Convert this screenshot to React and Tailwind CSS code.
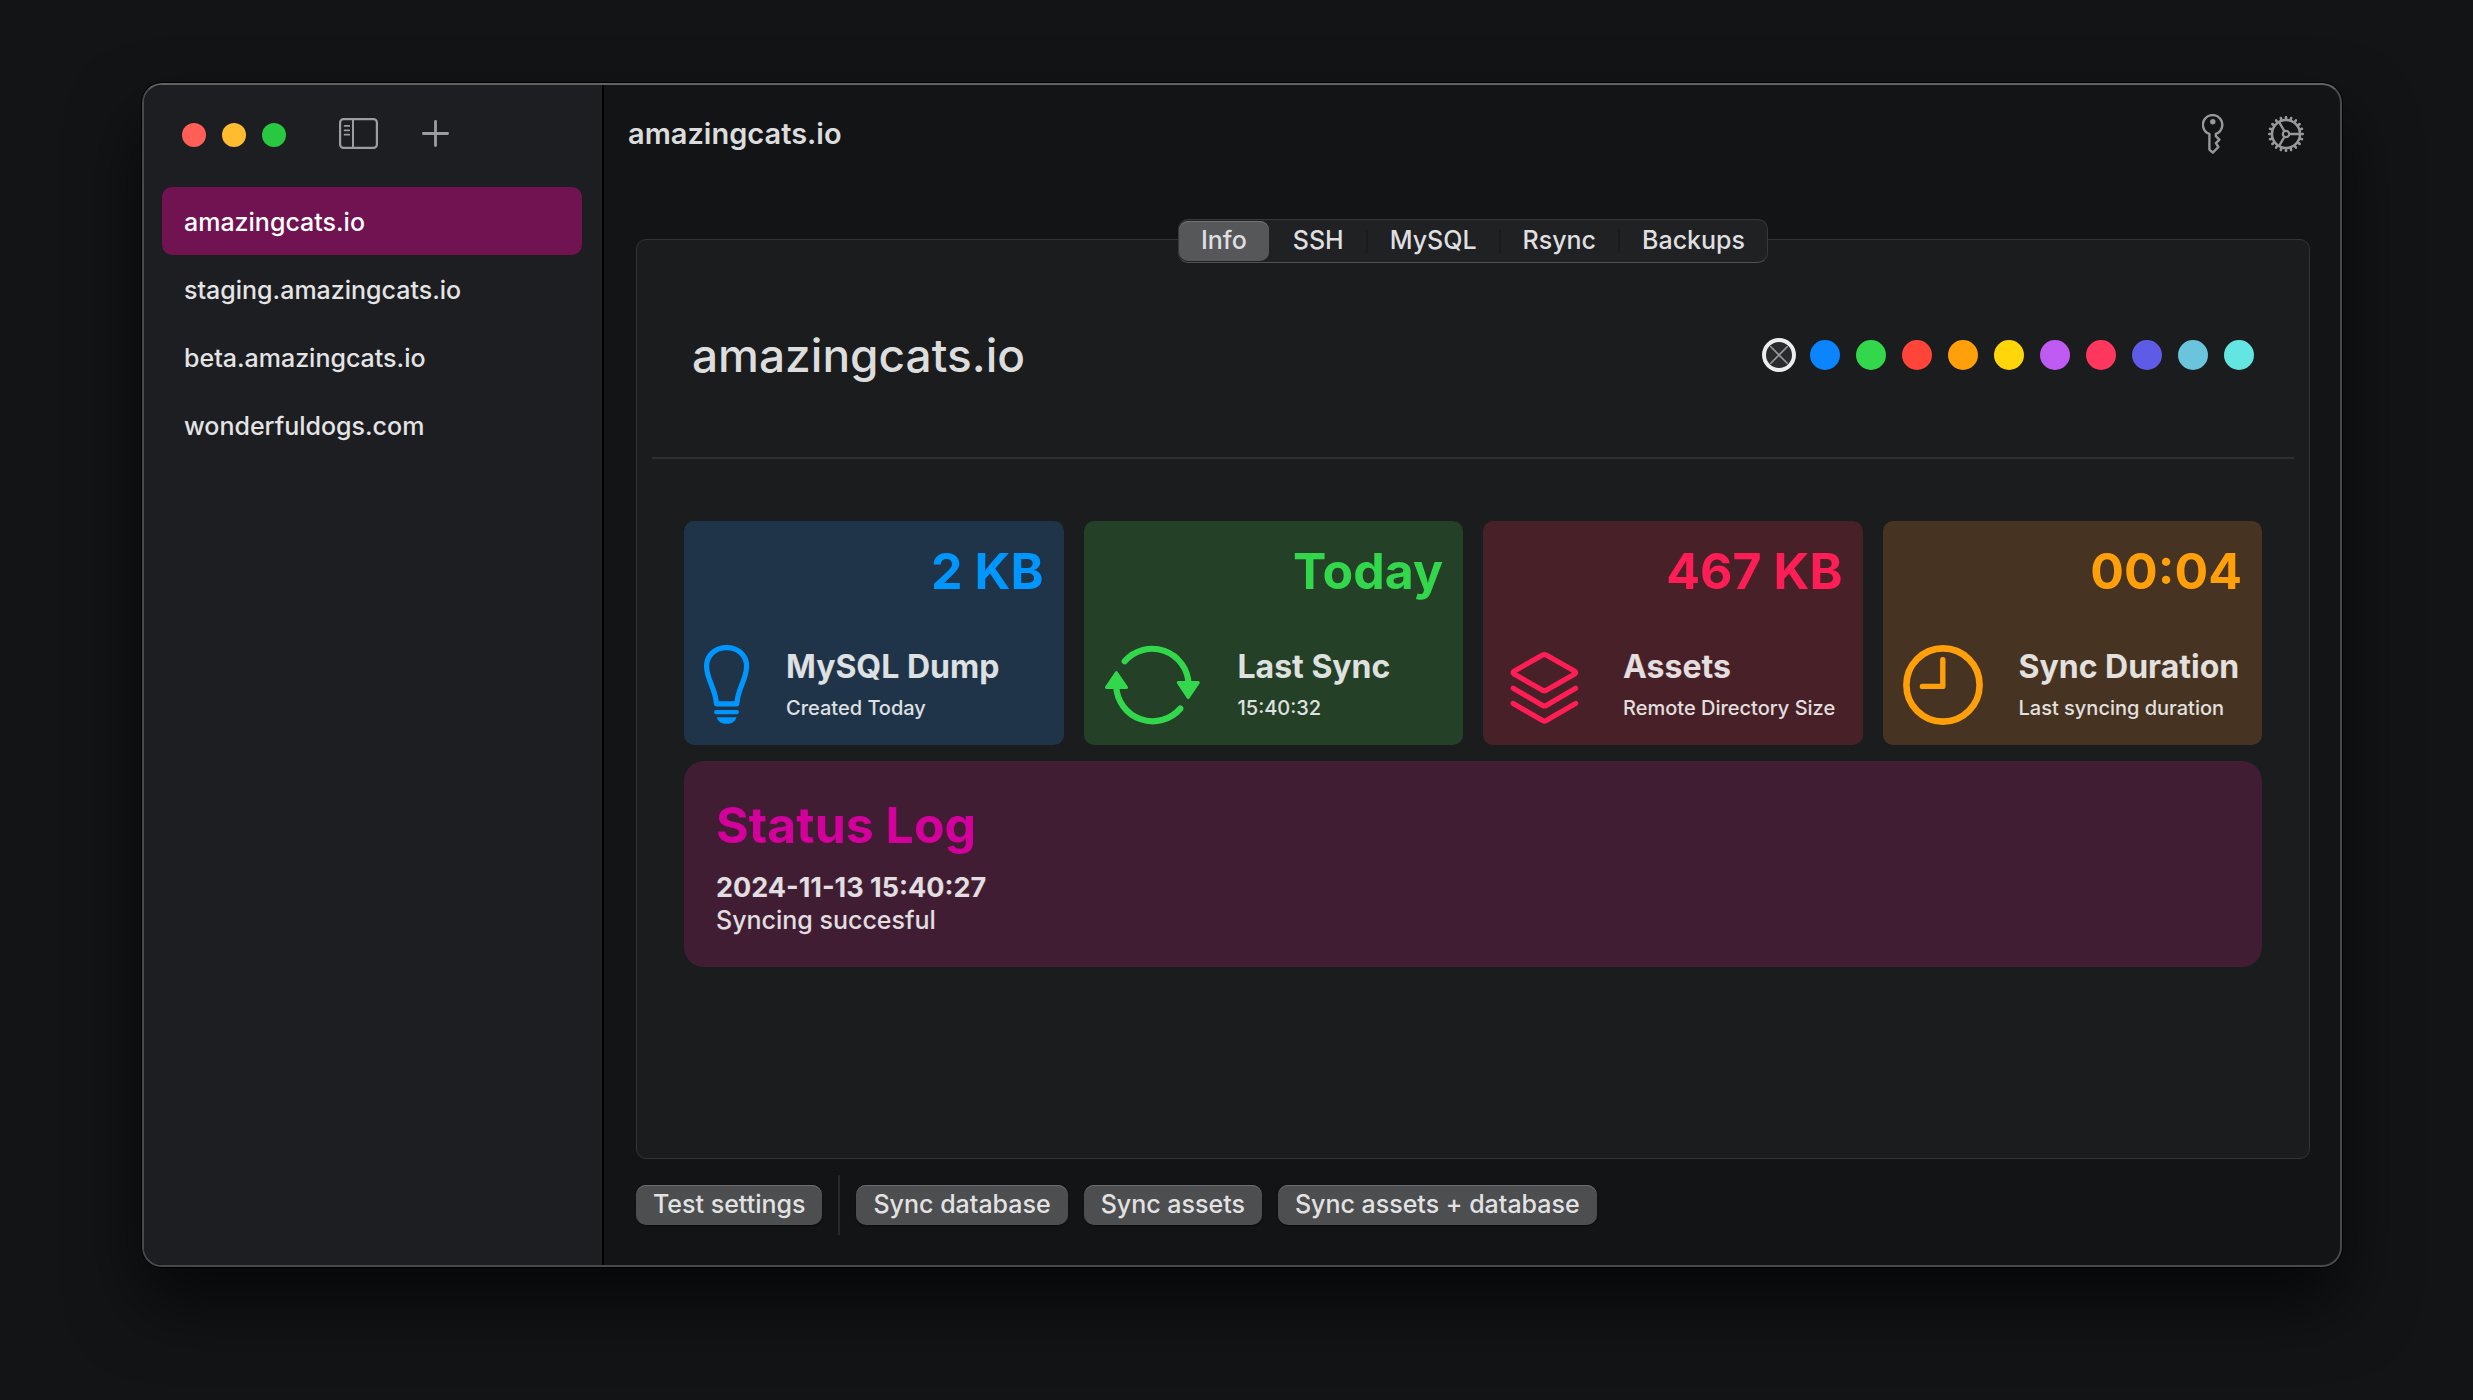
import React, { useState } from "react";

const sites = [
  "amazingcats.io",
  "staging.amazingcats.io",
  "beta.amazingcats.io",
  "wonderfuldogs.com",
];

const tabs = ["Info", "SSH", "MySQL", "Rsync", "Backups"];

const swatches = [
  { name: "Blue", color: "bg-[#0a84ff]" },
  { name: "Green", color: "bg-[#32d74b]" },
  { name: "Red", color: "bg-[#ff453a]" },
  { name: "Orange", color: "bg-[#ff9f0a]" },
  { name: "Yellow", color: "bg-[#ffd60a]" },
  { name: "Purple", color: "bg-[#bf5af2]" },
  { name: "Pink", color: "bg-[#ff375f]" },
  { name: "Indigo", color: "bg-[#5e5ce6]" },
  { name: "Cyan", color: "bg-[#6ac4dc]" },
  { name: "Mint", color: "bg-[#63e6e2]" },
];

function SidebarIcon() {
  return (
    <svg width="39" height="31" viewBox="0 0 39 31" fill="none" stroke="currentColor" aria-hidden="true">
      <rect x="1.1" y="1.1" width="36.8" height="28.8" rx="3.5" strokeWidth="2.2" />
      <path d="M14 1v29" strokeWidth="2" />
      <path d="M5.6 7.9h4.6M5.6 12.3h4.6M5.6 16.7h4.6" strokeWidth="1.8" strokeLinecap="round" />
    </svg>
  );
}

function PlusIcon() {
  return (
    <svg width="27" height="27" viewBox="0 0 27 27" fill="none" stroke="currentColor" strokeWidth="2.8" strokeLinecap="round" aria-hidden="true">
      <path d="M13.5 1.4v24.2M1.4 13.5h24.2" />
    </svg>
  );
}

function KeyIcon() {
  return (
    <svg width="22" height="40" viewBox="0 0 22 40" fill="none" stroke="currentColor" strokeWidth="2.4" strokeLinejoin="round" aria-hidden="true">
      <path d="M7.4 19.9A9.7 9.7 0 1 1 13.8 19.9V22.2L17.4 25.7L13.9 29.2L16.4 33L10.8 38.6L7.4 35.6Z" />
      <circle cx="10.8" cy="7.8" r="2.7" fill="currentColor" stroke="none" />
    </svg>
  );
}

const teeth = Array.from({ length: 20 }, (_, i) => i * 18);

function GearIcon() {
  return (
    <svg width="36" height="36" viewBox="0 0 36 36" fill="none" stroke="currentColor" aria-hidden="true">
      <circle cx="18" cy="18" r="14" strokeWidth="2.5" />
      <circle cx="18" cy="18" r="3.2" strokeWidth="2.2" />
      <path d="M21.2 18H32M16.4 15.2L11 5.9M16.4 20.8L11 30.1" strokeWidth="2.3" />
      {teeth.map((a) => (
        <path key={a} d="M32.6 18H34.8" strokeWidth="2.6" strokeLinecap="round" transform={`rotate(${a} 18 18)`} />
      ))}
    </svg>
  );
}

function BulbIcon() {
  return (
    <svg className="shrink-0" width="46" height="80" viewBox="0 0 46 80" fill="none" stroke="currentColor" aria-hidden="true">
      <path
        d="M12.4 58.8C11.6 43.5 2.6 34.5 2.6 21.2C2.6 10.2 11.4 2.6 22.6 2.6S42.6 10.2 42.6 21.2C42.6 34.5 33.6 43.5 32.8 58.8Z"
        strokeWidth="5.2"
        strokeLinejoin="round"
      />
      <rect x="10" y="65" width="25" height="4.2" rx="2.1" fill="currentColor" stroke="none" />
      <path d="M12.8 72.2H32.4C31.4 76.6 27.4 78.8 22.6 78.8S13.8 76.6 12.8 72.2Z" fill="currentColor" stroke="none" />
    </svg>
  );
}

function SyncIcon() {
  return (
    <svg className="shrink-0" width="98" height="80" viewBox="0 0 98 80" fill="none" stroke="currentColor" strokeLinecap="round" strokeLinejoin="round" aria-hidden="true">
      <path d="M20.7 16.2A36.5 36.5 0 0 1 84.6 39" strokeWidth="6.2" />
      <path d="M76.3 63.6A36.5 36.5 0 0 1 12.2 41" strokeWidth="6.2" />
      <path d="M74.4 37.6H94.2L84.2 52.4Z" fill="currentColor" strokeWidth="3.2" />
      <path d="M2.6 42.4H22.4L12.4 27.8Z" fill="currentColor" strokeWidth="3.2" />
    </svg>
  );
}

function LayersIcon() {
  return (
    <svg className="shrink-0" width="84" height="80" viewBox="0 0 84 80" fill="none" stroke="currentColor" strokeWidth="5.2" strokeLinecap="round" strokeLinejoin="round" aria-hidden="true">
      <path d="M11 26.2L39.6 10Q41.4 9 43.2 10L71.8 26.2Q73.6 27.6 71.8 29L43.2 45.2Q41.4 46.2 39.6 45.2L11 29Q9.2 27.6 11 26.2Z" />
      <path d="M10.2 43.2L39.6 60.4Q41.4 61.4 43.2 60.4L72.6 43.2" />
      <path d="M10.2 58.4L39.6 75.6Q41.4 76.6 43.2 75.6L72.6 58.4" />
    </svg>
  );
}

function ClockIcon() {
  return (
    <svg className="shrink-0" width="80" height="80" viewBox="0 0 80 80" fill="none" stroke="currentColor" strokeLinecap="round" strokeLinejoin="round" aria-hidden="true">
      <circle cx="40" cy="40" r="36.6" strokeWidth="6.6" />
      <path d="M39.8 14.6V41.4H19.4" strokeWidth="5.4" />
    </svg>
  );
}

const cards = [
  { value: "2 KB", title: "MySQL Dump", note: "Created Today", Icon: BulbIcon, bg: "bg-[#1f3449]", fg: "text-[#0096ff]" },
  { value: "Today", title: "Last Sync", note: "15:40:32", Icon: SyncIcon, bg: "bg-[#244027]", fg: "text-[#32d74b]" },
  { value: "467 KB", title: "Assets", note: "Remote Directory Size", Icon: LayersIcon, bg: "bg-[#482028]", fg: "text-[#ff1d55]" },
  { value: "00:04", title: "Sync Duration", note: "Last syncing duration", Icon: ClockIcon, bg: "bg-[#463321]", fg: "text-[#ff9f0a]" },
];

function StatCard({ value, title, note, Icon, bg, fg }) {
  return (
    <article className={`flex min-h-[224px] flex-1 flex-col justify-between rounded-[10px] px-5 py-5 ${bg}`}>
      <p className={`text-right text-[50px] leading-[60px] font-bold ${fg}`}>{value}</p>
      <div className="flex items-center gap-9">
        <span className={fg}>
          <Icon />
        </span>
        <div className="flex flex-col gap-2 whitespace-nowrap text-white/85">
          <h2 className="text-[32px] leading-[38px] font-bold">{title}</h2>
          <p className="text-[20px] leading-7 font-medium">{note}</p>
        </div>
      </div>
    </article>
  );
}

function ActionButton({ children }) {
  return (
    <button
      type="button"
      className="h-10 rounded-[10px] bg-[#4d4e50] px-[17px] pb-0.5 text-[25px] leading-8 font-medium whitespace-nowrap text-[#e2e2e3] shadow-[inset_0_1px_0_#6c6d6f,0_1px_2px_rgba(0,0,0,0.5)]"
    >
      {children}
    </button>
  );
}

export default function App() {
  const [site, setSite] = useState(sites[0]);
  const [tab, setTab] = useState(tabs[0]);
  const [color, setColor] = useState("None");

  return (
    <div className="flex min-h-screen bg-[#131416] pt-[83px] pr-[131px] pb-[133px] pl-[142px] font-['Inter',sans-serif]">
      <div className="flex flex-1 overflow-hidden rounded-[20px] border-2 border-[#48494a] border-t-[#616263] bg-[#131416] shadow-[0_0_0_1px_#000,0_36px_70px_rgba(0,0,0,0.65)]">
        <aside className="flex w-[460px] shrink-0 flex-col border-r-2 border-black bg-[#1d1e22]">
          <div className="flex h-25 items-center pl-[38px]">
            <div className="flex gap-4">
              <button type="button" aria-label="Close" className="size-6 rounded-full bg-[#ff5f57]" />
              <button type="button" aria-label="Minimize" className="size-6 rounded-full bg-[#febc2e]" />
              <button type="button" aria-label="Zoom" className="size-6 rounded-full bg-[#28c840]" />
            </div>
            <div className="flex items-center gap-11 pb-1 pl-[53px] text-[#9d9da1]">
              <button type="button" aria-label="Toggle sidebar">
                <SidebarIcon />
              </button>
              <button type="button" aria-label="Add site">
                <PlusIcon />
              </button>
            </div>
          </div>
          <nav className="pt-0.5 pr-5 pl-[18px]">
            <ul>
              {sites.map((name) => (
                <li key={name}>
                  <button
                    type="button"
                    onClick={() => setSite(name)}
                    className={`h-17 w-full rounded-[10px] px-[22px] pt-0.5 text-left text-[25px] leading-8 font-medium ${
                      site === name ? "bg-[#701350] text-white" : "text-[#e4e4e5]"
                    }`}
                  >
                    {name}
                  </button>
                </li>
              ))}
            </ul>
          </nav>
        </aside>

        <main className="flex min-w-0 flex-1 flex-col">
          <header className="flex h-25 items-center justify-between pr-9 pb-0.5 pl-6">
            <p className="text-[29px] leading-9 font-semibold text-[#dcdcdd]">{site}</p>
            <div className="flex items-center gap-11 text-[#98989c]">
              <button type="button" aria-label="Keys">
                <KeyIcon />
              </button>
              <button type="button" aria-label="Settings">
                <GearIcon />
              </button>
            </div>
          </header>

          <div className="flex flex-1 flex-col pt-[34px] pr-[30px] pb-[30px] pl-8">
            <div role="tablist" className="z-10 -mb-6 flex h-11 items-center self-center rounded-[10px] border border-[#37383a] border-b-[#505153] bg-[#202123]">
              {tabs.map((name, i) => (
                <React.Fragment key={name}>
                  {i > 0 && <span className={`h-6 w-0.5 ${i === 1 ? "bg-transparent" : "bg-[#1a1b1d]"}`} />}
                  <button
                    type="button"
                    role="tab"
                    aria-selected={tab === name}
                    onClick={() => setTab(name)}
                    className={`h-10 rounded-[9px] px-[22px] pb-0.5 text-[25px] leading-8 font-medium text-[#dfdfe0] ${
                      tab === name ? "bg-[#565758] shadow-[inset_0_1px_0_#727374]" : ""
                    }`}
                  >
                    {name}
                  </button>
                </React.Fragment>
              ))}
            </div>

            <section className="flex flex-1 flex-col rounded-[10px] border border-[#333436] bg-[#1b1c1e]">
              <div className="flex items-center justify-between px-[55px] pt-[87px] pb-[74px]">
                <h1 className="text-[46px] leading-14 font-medium text-[#dddddd]">{site}</h1>
                <div role="radiogroup" aria-label="Color" className="flex gap-4">
                  <label className="relative block size-[30px] rounded-full">
                    <input
                      type="radio"
                      name="color"
                      aria-label="None"
                      checked={color === "None"}
                      onChange={() => setColor("None")}
                      className="block size-[30px] appearance-none rounded-full border-2 border-transparent bg-[#2a2b2f] checked:border-[#ededed] checked:ring-2 checked:ring-[#ededed]"
                    />
                    <svg className="absolute top-0 left-0" width="30" height="30" viewBox="0 0 30 30" stroke="#98989c" strokeWidth="1.6" strokeLinecap="round" aria-hidden="true">
                      <path d="M6.8 6.8L23.2 23.2M23.2 6.8L6.8 23.2" />
                    </svg>
                  </label>
                  {swatches.map((s) => (
                    <input
                      key={s.name}
                      type="radio"
                      name="color"
                      aria-label={s.name}
                      checked={color === s.name}
                      onChange={() => setColor(s.name)}
                      className={`block size-[30px] appearance-none rounded-full checked:ring-2 checked:ring-[#ededed] ${s.color}`}
                    />
                  ))}
                </div>
              </div>
              <hr className="mx-[15px] border-t-2 border-[#2e2f31]" />

              <div className="flex flex-col gap-4 px-[47px] pt-[62px]">
                <div className="flex gap-5">
                  {cards.map((c) => (
                    <StatCard key={c.title} {...c} />
                  ))}
                </div>
                <article className="rounded-[20px] bg-[#401d33] px-8 pt-8 pb-[31px] text-white/85">
                  <h2 className="text-[50px] leading-16 font-bold text-[#d4009c]">Status Log</h2>
                  <p className="mt-[15px] text-[27px] leading-8 font-bold">2024-11-13 15:40:27</p>
                  <p className="text-[25px] leading-8 font-medium">Syncing succesful</p>
                </article>
              </div>
            </section>

            <footer className="mt-4 flex h-15 items-center gap-4">
              <ActionButton>Test settings</ActionButton>
              <span className="h-full w-0.5 bg-[#29292b]" />
              <ActionButton>Sync database</ActionButton>
              <ActionButton>Sync assets</ActionButton>
              <ActionButton>Sync assets + database</ActionButton>
            </footer>
          </div>
        </main>
      </div>
    </div>
  );
}
